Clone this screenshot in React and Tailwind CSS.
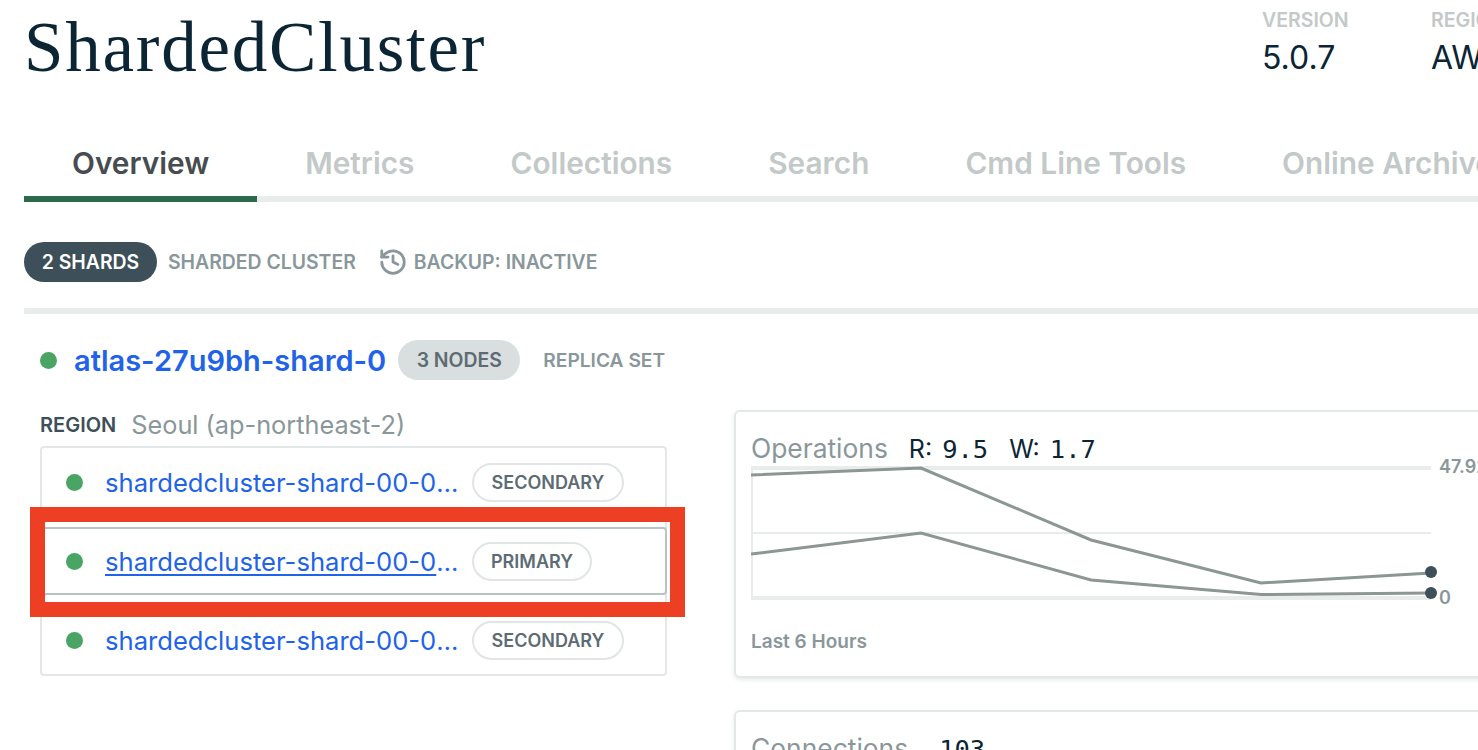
import { History } from "lucide-react";

const tabs = ["Overview", "Metrics", "Collections", "Search", "Cmd Line Tools", "Online Archive"];

const nodes = [
  { role: "SECONDARY", pill: "w-[152px]", row: "h-[68px]" },
  { role: "PRIMARY", pill: "w-[120px]", row: "h-[68px] mt-[11px] -mx-[2px] border-2 border-[#b8c4c2] rounded-[4px] bg-white", active: true },
  { role: "SECONDARY", pill: "w-[152px]", row: "h-[66px] mt-[12px]" },
];

function Dot({ className = "" }) {
  return <span className={"block w-[17px] h-[17px] rounded-full bg-[#4aa564] shrink-0 " + className} />;
}

function NodeRow({ node }) {
  return (
    <div className={"flex items-center pl-[24px] " + node.row}>
      <Dot />
      <div className="w-[376px] pl-[22px] pt-[1px] shrink-0 text-[25.6px] leading-[32px] text-[#2163e8] truncate">
        <span className={node.active ? "underline decoration-2 underline-offset-[3px]" : ""}>
          shardedcluster-shard-00-00.abcde.mongodb.net
        </span>
      </div>
      <div className={"ml-[13px] h-[39px] flex items-center justify-center rounded-full border-2 border-[#e1e5e5] bg-white text-[18px] font-semibold text-[#5d6c74] " + node.pill}>
        {node.role}
      </div>
    </div>
  );
}

function OperationsChart() {
  return (
    <div className="relative w-[700px] h-[136px] mt-[1px]">
      <svg width="700" height="136" viewBox="751 465 700 136" className="block">
        <rect x="751" y="466" width="680" height="4" fill="#e8edeb" />
        <rect x="751" y="532" width="680" height="2" fill="#e8edeb" />
        <rect x="751" y="596" width="680" height="4" fill="#e8edeb" />
        <rect x="751" y="466" width="2" height="134" fill="#e8edeb" />
        <polyline points="751,475 921,468 1091,540 1261,583 1431,573" fill="none" stroke="#8b9695" strokeWidth="3" />
        <polyline points="751,554 921,533 1091,580 1261,594.5 1431,593" fill="none" stroke="#8b9695" strokeWidth="3" />
        <circle cx="1431" cy="572" r="6" fill="#3d4f58" />
        <circle cx="1431" cy="593" r="6" fill="#3d4f58" />
      </svg>
      <span className="absolute left-[688px] top-[-9px] text-[18px] leading-[22px] font-semibold text-[#89979b]">47.92</span>
      <span className="absolute left-[688px] top-[122px] text-[18px] leading-[22px] font-semibold text-[#89979b]">0</span>
    </div>
  );
}

function Card({ title, children, className = "" }) {
  return (
    <div className={"w-[800px] border-2 border-[#e3e7e7] rounded-[6px] bg-white shadow-[0_2px_4px_rgba(61,79,88,0.12)] pl-[15px] pt-[21px] " + className}>
      <div className="flex items-center h-[32px] text-[26.4px] text-[#89979b]">{title}</div>
      {children}
    </div>
  );
}

function Metric({ label, value }) {
  return (
    <span className="flex items-baseline text-[#0b2535] text-[25px]">
      {label}
      <span className="ml-[10px] font-['DejaVu_Sans_Mono',monospace] text-[25.5px]">{value}</span>
    </span>
  );
}

export default function App() {
  return (
    <div className="relative w-[1478px] h-[750px] overflow-hidden bg-white pl-[24px] font-['Inter',sans-serif]">
      {/* Header */}
      <header className="flex h-[132px]">
        <h1 className="w-[1238px] shrink-0 pt-[7px] font-['Liberation_Serif',serif] text-[71px] leading-[80px] tracking-[1.75px] text-[#0b2535]">
          ShardedCluster
        </h1>
        <div className="w-[169px] shrink-0 pt-[9px]">
          <div className="text-[19.5px] leading-[22px] font-semibold text-[#c2c9c8]">VERSION</div>
          <div className="text-[32px] leading-[44px] mt-[5px] text-[#0b2535]">5.0.7</div>
        </div>
        <div className="shrink-0 pt-[9px]">
          <div className="text-[19.5px] leading-[22px] font-semibold text-[#c2c9c8]">REGION</div>
          <div className="text-[32px] leading-[44px] mt-[5px] text-[#0b2535]">AWS Seoul</div>
        </div>
      </header>

      {/* Tabs */}
      <nav className="flex h-[70px] border-b-[6px] border-[#e8edeb]">
        {tabs.map((tab, i) => (
          <div
            key={tab}
            className={
              "px-[48px] h-[70px] pb-[2px] shrink-0 flex items-center text-[29.8px] font-semibold border-b-[6px] " +
              (i === 0 ? "text-[#464c4f] border-[#2c6a4e]" : "text-[#c2c9c8] border-transparent")
            }
          >
            {tab}
          </div>
        ))}
      </nav>

      {/* Cluster meta */}
      <div className="flex items-center h-[40px] mt-[40px] text-[19.4px] font-semibold text-[#89979b]">
        <span className="h-[40px] w-[133px] pt-[1px] flex items-center justify-center rounded-full bg-[#3d4f58] text-white">2 SHARDS</span>
        <span className="ml-[11px] pt-[1px]">SHARDED CLUSTER</span>
        <History className="ml-[22px] -mt-[1px] w-[30px] h-[30px] text-[#89979b]" strokeWidth={2.2} />
        <span className="ml-[6px] pt-[1px]">BACKUP: INACTIVE</span>
      </div>
      <div className="h-[6px] mt-[26px] bg-[#e8edeb]" />

      {/* Shard */}
      <div className="flex items-center h-[40px] mt-[26px] pl-[16px]">
        <Dot />
        <a className="ml-[17px] pt-[1px] text-[29px] font-semibold text-[#2163e8]">atlas-27u9bh-shard-0</a>
        <span className="ml-[12px] w-[122px] h-[40px] pt-[1px] flex items-center justify-center rounded-full bg-[#d9dede] text-[19.4px] font-semibold text-[#5d6c74]">3 NODES</span>
        <span className="ml-[23px] pt-[1px] text-[19.2px] font-semibold text-[#89979b]">REPLICA SET</span>
      </div>

      <div className="flex mt-[30px] pl-[16px]">
        {/* Region and nodes */}
        <div className="w-[627px] shrink-0">
          <div className="flex items-center h-[30px]">
            <span className="text-[20px] font-semibold text-[#3d4f58]">REGION</span>
            <span className="ml-[15px] text-[25.3px] text-[#89979b]">Seoul (ap-northeast-2)</span>
          </div>
          <div className="mt-[6px] h-[230px] border-2 border-[#e3e7e7] rounded-[4px]">
            {nodes.map((node, i) => (
              <NodeRow key={i} node={node} />
            ))}
          </div>
        </div>

        {/* Charts */}
        <div className="ml-[67px] flex flex-col gap-[32px] shrink-0">
          <Card className="h-[268px]" title={
            <>
              <span>Operations</span>
              <span className="ml-[21px] flex gap-[21px]">
                <Metric label="R:" value="9.5" />
                <Metric label="W:" value="1.7" />
              </span>
            </>
          }>
            <div className="-mt-[1px]">
              <OperationsChart />
            </div>
            <div className="mt-[27px] text-[19px] font-semibold text-[#89979b]">Last 6 Hours</div>
          </Card>
          <Card className="h-[120px]" title={
            <>
              <span>Connections</span>
              <span className="ml-[31px] font-['DejaVu_Sans_Mono',monospace] text-[25.5px] text-[#0b2535]">103</span>
            </>
          } />
        </div>
      </div>

      {/* Red highlight drawn over the primary node */}
      <div className="absolute left-[30px] top-[507px] w-[655px] h-[110px] border-[15px] border-[#ed3f24] pointer-events-none" />
    </div>
  );
}
